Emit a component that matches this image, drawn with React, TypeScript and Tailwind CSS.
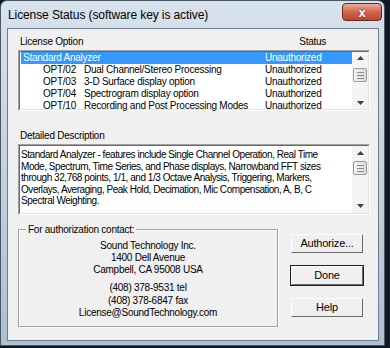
import React from "react";

const font = { fontFamily: '"Liberation Sans", Arial, sans-serif' };

function ScrollArrow({ up }: { up?: boolean }) {
  return (
    <svg width="7" height="4" viewBox="0 0 7 4">
      {up ? <polygon points="0,4 7,4 3.5,0" fill="#404040" /> : <polygon points="0,0 7,0 3.5,4" fill="#404040" />}
    </svg>
  );
}

function Thumb({ h }: { h: number }) {
  return (
    <div
      className="w-[14px] mx-auto border border-[#9a9a9a] bg-gradient-to-r from-[#f4f4f4] to-[#dcdcdc] rounded-[2px] flex flex-col items-center justify-center gap-[2px]"
      style={{ height: h }}
    >
      <div className="w-[7px] h-[1px] bg-[#8a8a8a]" />
      <div className="w-[7px] h-[1px] bg-[#8a8a8a]" />
      <div className="w-[7px] h-[1px] bg-[#8a8a8a]" />
    </div>
  );
}

function Button({ label, def }: { label: string; def?: boolean }) {
  return (
    <div className={def ? "border border-[#202020]" : "border border-transparent"}>
      <div className="h-[19px] w-[72px] flex items-center justify-center bg-[#f0f0f0] border-t border-l border-t-white border-l-white border-r border-b border-r-[#696969] border-b-[#696969] text-[11px] tracking-[-0.2px] text-black">
        {label}
      </div>
    </div>
  );
}

const rows = [
  ["OPT/02", "Dual Channel/Stereo Processing"],
  ["OPT/03", "3-D Surface display option"],
  ["OPT/04", "Spectrogram display option"],
  ["OPT/10", "Recording and Post Processing Modes"],
];

export default function App() {
  return (
    <div className="w-[390px] h-[348px] bg-[#0d1822] overflow-hidden" style={font}>
      <div className="relative w-[385px] h-[346px] rounded-t-[7px] border border-[#4a5866] bg-gradient-to-b from-[#d7e2ec] via-[#c3d2df] to-[#aebfce] pl-[6px] pr-[5px] pb-[4px] flex flex-col">
        <div className="h-[27px] flex items-center pl-[1px] pt-[1px] text-[12px] tracking-[-0.1px] text-black">License Status (software key is active)</div>
        <div className="absolute right-[2px] top-[2px] w-[40px] h-[18px] rounded-[4px] border border-[#6b2a20] bg-gradient-to-b from-[#e8ae9f] via-[#d0644c] to-[#c0462e] flex items-center justify-center">
          <span className="text-white text-[13px] font-bold leading-none" style={{ textShadow: "0 0 2px #5a1a10" }}>x</span>
        </div>
        <div className="flex-1 border border-[#6d7d8d] bg-[#f0f0f0] relative text-[10px] tracking-[-0.25px] text-black">
          {/* License Option header */}
          <div className="flex h-[20px] items-end pb-[0px]">
            <span className="ml-[12px]">License Option</span>
            <span className="ml-[216px]">Status</span>
          </div>
          {/* Listbox */}
          <div className="mt-[1px] ml-[10px] w-[352px] h-[61px] border-t border-l border-t-[#a0a0a0] border-l-[#a0a0a0] border-b border-r border-b-white border-r-white">
            <div className="w-full h-full border-t border-l border-t-[#696969] border-l-[#696969] border-b border-r border-b-[#e3e3e3] border-r-[#e3e3e3] bg-white flex">
              <div className="flex-1 flex flex-col leading-[12px]">
                <div className="h-[12px] bg-[#3399ff] text-white flex ml-[1px]">
                  <span className="w-[244px] pl-[2px]">Standard Analyzer</span>
                  <span>Unauthorized</span>
                </div>
                {rows.map(([a, b]) => (
                  <div key={a} className="h-[12px] flex ml-[1px]">
                    <span className="w-[244px] pl-[22px] flex">
                      <span className="w-[41px]">{a}</span>
                      <span className="whitespace-nowrap">{b}</span>
                    </span>
                    <span>Unauthorized</span>
                  </div>
                ))}
              </div>
              <div className="w-[16px] flex flex-col items-center bg-[#f4f4f4]">
                <div className="h-[12px] flex items-center"><ScrollArrow up /></div>
                <div className="mt-[4px]"><Thumb h={14} /></div>
                <div className="flex-1" />
                <div className="h-[12px] flex items-center"><ScrollArrow /></div>
              </div>
            </div>
          </div>
          {/* Detailed Description */}
          <div className="h-[33px] flex items-end pb-[1px] ml-[12px]">Detailed Description</div>
          <div className="ml-[10px] w-[352px] h-[71px] border-t border-l border-t-[#a0a0a0] border-l-[#a0a0a0] border-b border-r border-b-white border-r-white">
            <div className="w-full h-full border-t border-l border-t-[#696969] border-l-[#696969] border-b border-r border-b-[#e3e3e3] border-r-[#e3e3e3] bg-white flex">
              <div className="flex-1 pl-[1px] pt-[3px] leading-[11.5px] whitespace-nowrap tracking-[-0.45px]">
                <div>Standard Analyzer - features include Single Channel Operation, Real Time</div>
                <div>Mode, Spectrum, Time Series, and Phase displays, Narrowband FFT sizes</div>
                <div>through 32,768 points, 1/1, and 1/3 Octave Analysis, Triggering, Markers,</div>
                <div>Overlays, Averaging, Peak Hold, Decimation, Mic Compensation, A, B, C</div>
                <div>Spectral Weighting.</div>
              </div>
              <div className="w-[16px] flex flex-col items-center bg-[#f4f4f4]">
                <div className="h-[14px] flex items-center"><ScrollArrow up /></div>
                <div className="mt-[1px]"><Thumb h={14} /></div>
                <div className="flex-1" />
                <div className="h-[14px] flex items-center"><ScrollArrow /></div>
              </div>
            </div>
          </div>
          {/* Bottom area */}
          <div className="flex mt-[14px]">
            <div className="relative ml-[10px] w-[260px] h-[98px] border border-[#a0a0a0]" style={{ boxShadow: "inset 1px 1px 0 #fff, 1px 1px 0 #fff" }}>
              <span className="absolute left-[7px] top-[-7px] bg-[#f0f0f0] px-[2px] leading-[13px]">For authorization contact:</span>
              <div className="flex flex-col items-center pt-[10px] leading-[12px] text-center">
                <div>Sound Technology Inc.</div>
                <div>1400 Dell Avenue</div>
                <div>Campbell, CA 95008 USA</div>
                <div className="mt-[6px]">(408) 378-9531 tel</div>
                <div className="mt-[1px]">(408) 378-6847 fax</div>
                <div>License@SoundTechnology.com</div>
              </div>
            </div>
            <div className="ml-[12px] flex flex-col gap-[11px] mt-[4px]">
              <Button label="Authorize..." />
              <Button label="Done" def />
              <Button label="Help" />
            </div>
          </div>
        </div>
      </div>
    </div>
  );
}
